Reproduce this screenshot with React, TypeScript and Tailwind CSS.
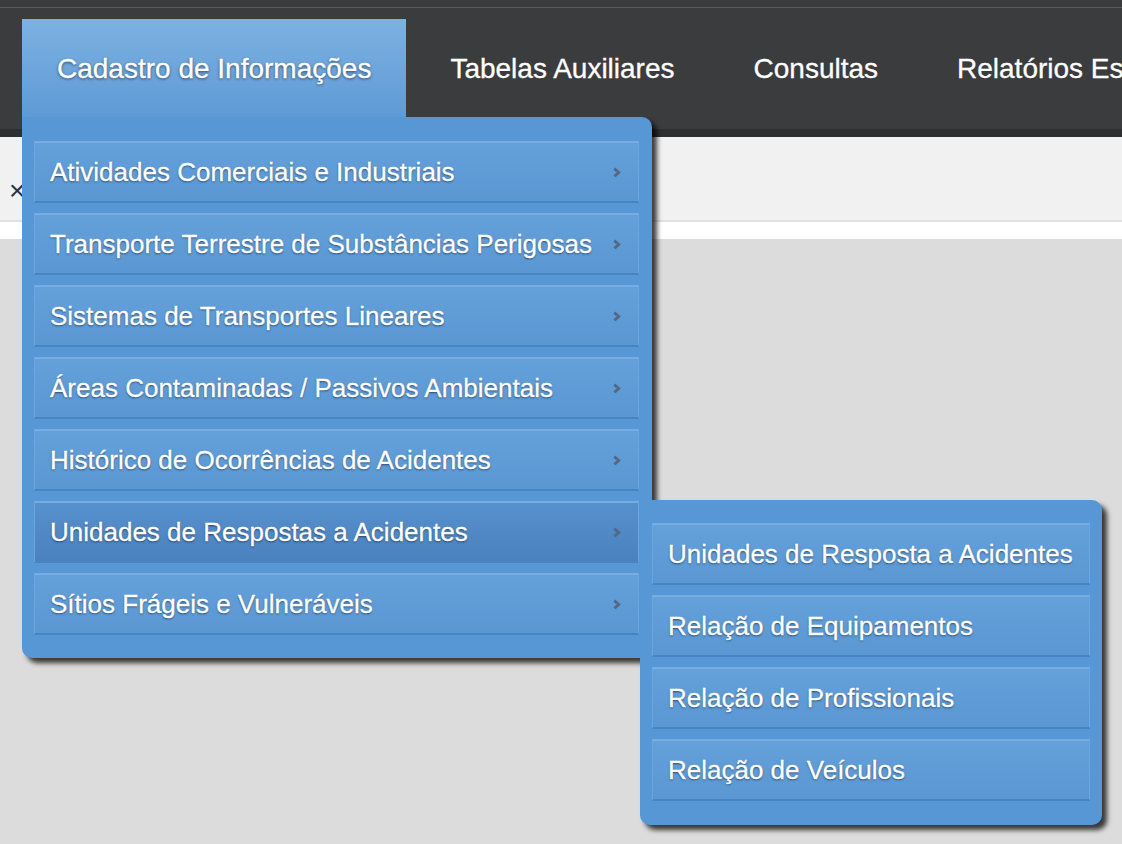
const navItems = ["Tabelas Auxiliares", "Consultas", "Relatórios Estatísticos"];

const menuItems = [
  "Atividades Comerciais e Industriais",
  "Transporte Terrestre de Substâncias Perigosas",
  "Sistemas de Transportes Lineares",
  "Áreas Contaminadas / Passivos Ambientais",
  "Histórico de Ocorrências de Acidentes",
  "Unidades de Respostas a Acidentes",
  "Sítios Frágeis e Vulneráveis",
];

const subItems = [
  "Unidades de Resposta a Acidentes",
  "Relação de Equipamentos",
  "Relação de Profissionais",
  "Relação de Veículos",
];

const Chevron = () => (
  <svg width="11" height="11" viewBox="0 0 10 10" className="shrink-0">
    <path d="M3 1.5 L7 5 L3 8.5" fill="none" stroke="#56687f" strokeWidth="2.6" />
  </svg>
);

const MenuItem = ({ label, active, arrow }: { label: string; active?: boolean; arrow?: boolean }) => (
  <div
    className={
      "flex h-[62px] items-center justify-between border border-t-2 border-b-2 border-t-[#78ade3] border-l-[#6da5de] border-r-[#6da5de] border-b-[#4a83c1] pl-[15px] pr-[16px] " +
      (active
        ? "bg-gradient-to-b from-[#5690cd] to-[#4a82bf]"
        : "bg-gradient-to-b from-[#64a1db] to-[#5a97d3]")
    }
  >
    <span className="whitespace-nowrap text-[26px] leading-[30px] text-white [-webkit-text-stroke:0.3px_white] [text-shadow:0_1px_2px_rgba(0,0,0,0.55)]">
      {label}
    </span>
    {arrow && <Chevron />}
  </div>
);

export default function App() {
  return (
    <div className="relative h-[844px] w-[1122px] overflow-hidden bg-[#dcdcdc] font-['Liberation_Sans',Arial,sans-serif]">
      {/* top bar */}
      <div className="h-[7px] bg-[#3a3b3d]" />
      <div className="h-[1px] bg-[#58595b]" />
      <div className="flex h-[121px] items-end gap-[9px] overflow-hidden bg-[#3b3c3e] pl-[22px]">
        <div className="h-[110px] shrink-0 bg-gradient-to-b from-[#7db1e2] to-[#5a98d4] px-[35px] pt-[34px]">
          <span className="whitespace-nowrap text-[28px] leading-[32px] text-white [-webkit-text-stroke:0.3px_white] [text-shadow:0_1px_3px_rgba(0,0,0,0.6)]">
            Cadastro de Informações
          </span>
        </div>
        {navItems.map((n) => (
          <div key={n} className="h-[110px] shrink-0 px-[35px] pt-[34px]">
            <span className="whitespace-nowrap text-[28px] leading-[32px] text-white [-webkit-text-stroke:0.3px_white]">{n}</span>
          </div>
        ))}
      </div>
      <div className="h-[8px] bg-[#2e2f31]" />
      <div className="flex h-[83px] items-start bg-[#f1f1f1] pl-[9px] pt-[40px]">
        <span className="text-[28px] leading-[28px] text-[#333]">×</span>
      </div>
      <div className="h-[2px] bg-[#e0e0e0]" />
      <div className="h-[17px] bg-white" />

      {/* dropdown */}
      <div className="absolute left-[22px] top-[117px] flex w-[630px] flex-col gap-[10px] rounded-b-[10px] rounded-tr-[10px] bg-[#5897d5] pb-[23px] pl-[12px] pr-[13px] pt-[24px] shadow-[5px_5px_5px_rgba(0,0,0,0.75)]">
        {menuItems.map((m, i) => (
          <MenuItem key={m} label={m} arrow active={i === 5} />
        ))}
      </div>

      {/* submenu */}
      <div className="absolute left-[640px] top-[500px] flex w-[462px] flex-col gap-[10px] rounded-[10px] bg-[#5897d5] pb-[24px] pl-[12px] pr-[12px] pt-[23px] shadow-[5px_5px_5px_rgba(0,0,0,0.75)]">
        {subItems.map((s) => (
          <MenuItem key={s} label={s} />
        ))}
      </div>
    </div>
  );
}
